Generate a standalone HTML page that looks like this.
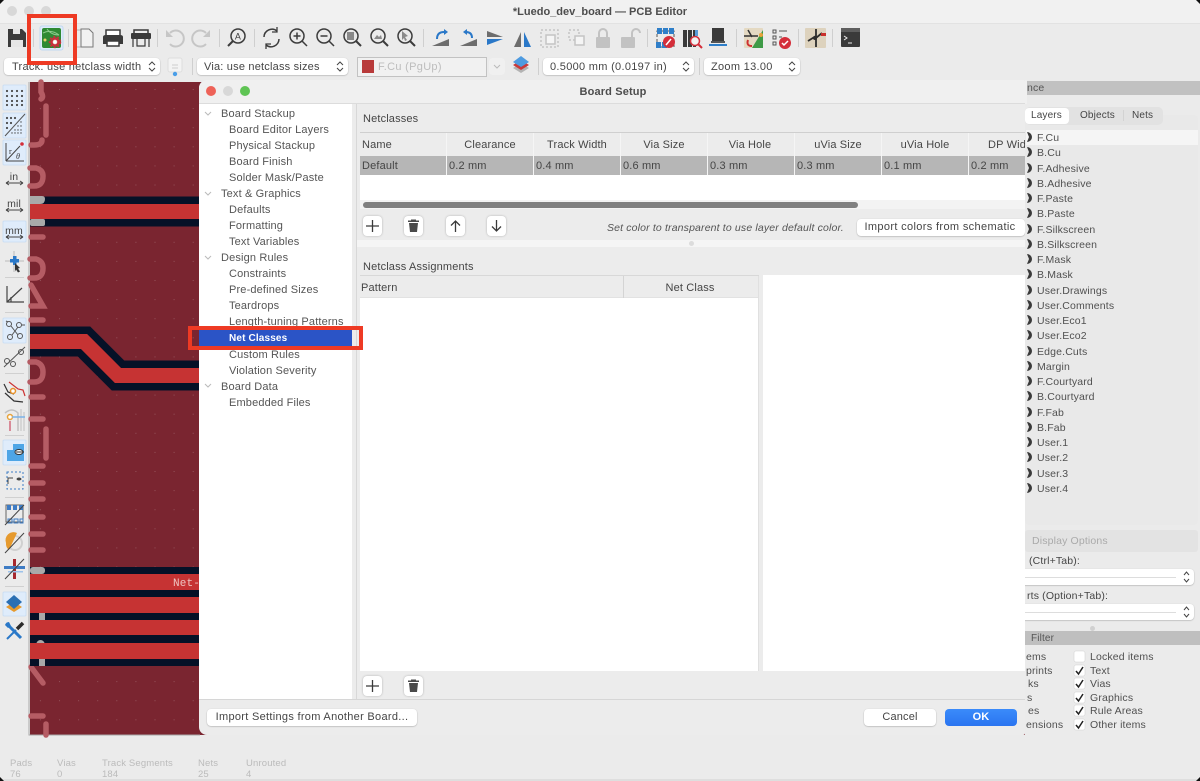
<!DOCTYPE html>
<html><head><meta charset="utf-8"><title>PCB Editor</title>
<style>
html,body{margin:0;padding:0;background:#ebebeb}
#r{position:relative;width:1200px;height:781px;overflow:hidden;background:#ebebeb;font-family:"Liberation Sans",sans-serif;font-size:11px;color:#454545;letter-spacing:.15px;filter:blur(.3px)}
.a{position:absolute}
.t{position:absolute;white-space:nowrap;line-height:14px;height:14px}
.c{transform:translateX(-50%)}
.b{position:absolute;background:#fff;border-radius:4px;box-shadow:0 .5px 1.5px rgba(0,0,0,.28)}
svg{position:absolute;left:0;top:0}
.w{position:absolute;left:0;top:1px}
.tree .t{color:#555}
</style></head><body><div id="r">
<div class="a" style="left:0;top:0;width:1200px;height:23px;background:#f1f1f1;border-bottom:1px solid #e2e2e2"></div>
<div class="t c" style="left:600px;top:5px;font-size:11px;font-weight:bold;color:#4d4d4d;letter-spacing:0">*Luedo_dev_board — PCB Editor</div>

<svg width="1200" height="781" viewBox="0 0 1200 781">
<defs><pattern id="g" x="59" y="89" width="19.1" height="19.1" patternUnits="userSpaceOnUse"><rect x="0" y="0" width="1" height="1" fill="#94525a"/></pattern></defs>
<circle cx="12" cy="11" r="5" fill="#d8d8d8"/><circle cx="29" cy="11" r="5" fill="#d8d8d8"/><circle cx="46" cy="11" r="5" fill="#d8d8d8"/>
<rect x="30" y="82" width="995" height="653" fill="#7a2530"/>
<rect x="30" y="82" width="995" height="653" fill="url(#g)"/>
<path d="M29 82V735H200" stroke="#a8a8a8" fill="none"/>
<!-- silk -->
<g fill="none" stroke="#b55c64" stroke-width="5.500" stroke-linecap="round">
<path d="M41 82V92Q44 97 41 99"/><path d="M46 106V135"/><path d="M31 145H34Q42 145 42 140"/>
<path d="M30 168H36Q43 170 43 176Q43 186 34 186H30"/><path d="M31 237H43"/>
<path d="M30 259H36Q43 261 43 268Q43 278 34 278H30"/><path d="M31 285L43 306H31"/><path d="M31 320H43"/>
<path d="M30 362H36Q43 364 43 372Q43 382 34 382H30"/><path d="M31 397H43"/>
<path d="M31 419H43"/><path d="M46 429V458"/><path d="M31 466H43"/><path d="M31 483H43"/><path d="M31 499H43"/><path d="M31 517H43"/><path d="M31 534H43"/><path d="M31 550H43"/>
<path d="M31 667L43 683"/><path d="M31 716H43"/><path d="M46 724V735"/>
</g>
<!-- tracks -->
<g fill="none" stroke="#061127" stroke-width="30"><path d="M30 211.500H210"/><path d="M30 341.500H84L118 375.500H210"/></g>
<g fill="#061127"><rect x="30" y="567" width="180" height="99"/></g>
<g fill="#a9a9a9"><path d="M30 196H42Q45 196 45 199Q45 204 40 204H30Z"/><rect x="30" y="219" width="15" height="7" rx="2"/><rect x="30" y="567" width="15" height="7" rx="3"/><rect x="39" y="612" width="6" height="9"/><path d="M36 644a5 7 0 0 1 9 0Z"/><rect x="39" y="658" width="6" height="8"/></g>
<g fill="none" stroke="#c63333" stroke-width="15"><path d="M30 211.500H210"/><path d="M30 341.500H84L118 375.500H210"/></g>
<g fill="#c63333"><rect x="30" y="574" width="180" height="16"/><rect x="30" y="597" width="180" height="16"/><rect x="30" y="620" width="180" height="15"/><rect x="30" y="643" width="180" height="16"/></g>
<text x="173" y="586" font-family="Liberation Mono" font-size="11" fill="#eec4c0">Net-</text>
</svg>

<!-- right panel -->
<div class="a" style="left:1025px;top:81px;width:175px;height:14px;background:#c1c1c1"></div>
<div class="t" style="left:1027px;top:81px;font-size:10.500px;color:#555">nce</div>
<div class="a" style="left:1025px;top:115px;width:173px;height:410px;background:#e9e9e9;border-radius:4px"></div>
<div class="a" style="left:1025px;top:107px;width:138px;height:18px;background:#e2e2e2;border-radius:5px"></div>
<div class="a" style="left:1025px;top:108px;width:44px;height:16px;background:#fff;border-radius:4px"></div>
<div class="t" style="left:1031px;top:109px;font-size:10px">Layers</div>
<div class="t" style="left:1080px;top:109px;font-size:10px">Objects</div>
<div class="t" style="left:1132px;top:109px;font-size:10px">Nets</div>
<div class="a" style="left:1123px;top:110px;width:1px;height:11px;background:#d3d3d3"></div>
<div class="a" style="left:1026px;top:130px;width:172px;height:15px;background:#f5f5f5"></div>
<svg width="1200" height="781" viewBox="0 0 1200 781"><defs><path id="cr" d="M1027 -5A5 5 0 0 1 1027 5L1029 0Z"/></defs><g fill="#3a3a3a">
<use href="#cr" y="137"/><use href="#cr" y="152"/><use href="#cr" y="168"/><use href="#cr" y="183"/><use href="#cr" y="198"/><use href="#cr" y="213"/><use href="#cr" y="229"/><use href="#cr" y="244"/><use href="#cr" y="259"/><use href="#cr" y="274"/><use href="#cr" y="290"/><use href="#cr" y="305"/><use href="#cr" y="320"/><use href="#cr" y="335"/><use href="#cr" y="351"/><use href="#cr" y="366"/><use href="#cr" y="381"/><use href="#cr" y="396"/><use href="#cr" y="412"/><use href="#cr" y="427"/><use href="#cr" y="442"/><use href="#cr" y="457"/><use href="#cr" y="473"/><use href="#cr" y="488"/></g></svg>
<div class="w" style="font-size:10.500px;color:#505050">
<div class="t" style="left:1037px;top:130px">F.Cu</div><div class="t" style="left:1037px;top:145px">B.Cu</div><div class="t" style="left:1037px;top:161px">F.Adhesive</div><div class="t" style="left:1037px;top:176px">B.Adhesive</div><div class="t" style="left:1037px;top:191px">F.Paste</div><div class="t" style="left:1037px;top:206px">B.Paste</div><div class="t" style="left:1037px;top:222px">F.Silkscreen</div><div class="t" style="left:1037px;top:237px">B.Silkscreen</div><div class="t" style="left:1037px;top:252px">F.Mask</div><div class="t" style="left:1037px;top:267px">B.Mask</div><div class="t" style="left:1037px;top:283px">User.Drawings</div><div class="t" style="left:1037px;top:298px">User.Comments</div><div class="t" style="left:1037px;top:313px">User.Eco1</div><div class="t" style="left:1037px;top:328px">User.Eco2</div><div class="t" style="left:1037px;top:344px">Edge.Cuts</div><div class="t" style="left:1037px;top:359px">Margin</div><div class="t" style="left:1037px;top:374px">F.Courtyard</div><div class="t" style="left:1037px;top:389px">B.Courtyard</div><div class="t" style="left:1037px;top:405px">F.Fab</div><div class="t" style="left:1037px;top:420px">B.Fab</div><div class="t" style="left:1037px;top:435px">User.1</div><div class="t" style="left:1037px;top:450px">User.2</div><div class="t" style="left:1037px;top:466px">User.3</div><div class="t" style="left:1037px;top:481px">User.4</div>
</div>
<div class="a" style="left:1025px;top:530px;width:173px;height:22px;background:#e3e3e3;border-radius:3px"></div>
<div class="t" style="left:1032px;top:534px;font-size:10.500px;color:#aaa">Display Options</div>
<div class="t" style="left:1029px;top:554px;font-size:10.500px">(Ctrl+Tab):</div>
<div class="b" style="left:1020px;top:569px;width:174px;height:16px"></div>
<div class="a" style="left:1025px;top:577px;width:151px;height:1px;background:#ddd"></div>
<div class="t" style="left:1027px;top:589px;font-size:10.500px">rts (Option+Tab):</div>
<div class="b" style="left:1020px;top:604px;width:174px;height:16px"></div>
<div class="a" style="left:1025px;top:612px;width:151px;height:1px;background:#ddd"></div>
<div class="a" style="left:1090px;top:626px;width:5px;height:5px;border-radius:3px;background:#d0d0d0"></div>
<div class="a" style="left:1025px;top:631px;width:175px;height:14px;background:#bfbfbf"></div>
<div class="t" style="left:1031px;top:632px;font-size:10px;color:#555">Filter</div>
<div style="font-size:10.500px;color:#505050">
<div class="t" style="left:1026px;top:650px">ems</div><div class="t" style="left:1026px;top:664px">prints</div><div class="t" style="left:1028px;top:677px">ks</div><div class="t" style="left:1027px;top:691px">s</div><div class="t" style="left:1028px;top:704px">es</div><div class="t" style="left:1026px;top:718px">ensions</div>
<div class="t" style="left:1090px;top:650px">Locked items</div><div class="t" style="left:1090px;top:664px">Text</div><div class="t" style="left:1090px;top:677px">Vias</div><div class="t" style="left:1090px;top:691px">Graphics</div><div class="t" style="left:1090px;top:704px">Rule Areas</div><div class="t" style="left:1090px;top:718px">Other items</div>
</div>
<svg width="1200" height="781" viewBox="0 0 1200 781">
<g fill="#fff" stroke="#d2d2d2" stroke-width=".6"><rect x="1074" y="651" width="11" height="11" rx="2"/><rect x="1074" y="665" width="11" height="11" rx="2"/><rect x="1074" y="678" width="11" height="11" rx="2"/><rect x="1074" y="692" width="11" height="11" rx="2"/><rect x="1074" y="705" width="11" height="11" rx="2"/><rect x="1074" y="719" width="11" height="11" rx="2"/></g>
<g fill="none" stroke="#222" stroke-width="1.500"><path d="M1076 671l2.500 3 4.500-7"/><path d="M1076 684l2.500 3 4.500-7"/><path d="M1076 698l2.500 3 4.500-7"/><path d="M1076 711l2.500 3 4.500-7"/><path d="M1076 725l2.500 3 4.500-7"/></g>
<g fill="none" stroke="#444" stroke-width="1"><path d="M1184 575l2.500-3 2.500 3M1184 579l2.500 3 2.500-3"/><path d="M1184 610l2.500-3 2.500 3M1184 614l2.500 3 2.500-3"/></g>
</svg>

<!-- dialog -->
<div class="a" style="left:199px;top:80px;width:826px;height:655px;background:#ececec;border-radius:8px 2px 2px 8px;overflow:hidden">
<div class="a" style="left:0;top:0;width:826px;height:23px;background:#f0f0f0;border-bottom:1px solid #dcdcdc"></div>
<div class="a" style="left:0;top:24px;width:153px;height:595px;background:#fff"></div>
<div class="a" style="left:157px;top:24px;width:1px;height:595px;background:#d8d8d8"></div>
<div class="a" style="left:0;top:619px;width:826px;height:1px;background:#d6d6d6"></div>
<div class="a" style="left:0;top:250px;width:153px;height:16px;background:#2b54c6"></div>
<div class="a" style="left:161px;top:52px;width:665px;height:1px;background:#cfcfcf"></div>
<div class="a" style="left:161px;top:76px;width:665px;height:19px;background:#b6b6b6"></div>
<div class="a" style="left:161px;top:95px;width:665px;height:25px;background:#fff"></div>
<div class="a" style="left:161px;top:120px;width:665px;height:9px;background:#f3f3f3"></div>
<div class="a" style="left:164px;top:122px;width:495px;height:6px;border-radius:3px;background:#808080"></div>
<div class="a" style="left:158px;top:160px;width:668px;height:7px;background:#f5f5f5"></div>
<div class="a" style="left:490px;top:161px;width:5px;height:5px;border-radius:3px;background:#dcdcdc"></div>
<div class="a" style="left:161px;top:218px;width:399px;height:373px;background:#fff"></div>
<div class="a" style="left:564px;top:195px;width:262px;height:396px;background:#fff"></div>
<div class="a" style="left:161px;top:195px;width:399px;height:23px;background:#ececec;border-top:1px solid #d8d8d8;border-bottom:1px solid #e2e2e2;box-sizing:border-box"></div>
<div class="a" style="left:424px;top:196px;width:1px;height:22px;background:#d4d4d4"></div>
<div class="a" style="left:559px;top:196px;width:1px;height:395px;background:#e0e0e0"></div>
<div class="a" style="left:247px;top:53px;width:1px;height:42px;background:#f5f5f5"></div><div class="a" style="left:334px;top:53px;width:1px;height:42px;background:#f5f5f5"></div><div class="a" style="left:421px;top:53px;width:1px;height:42px;background:#f5f5f5"></div><div class="a" style="left:508px;top:53px;width:1px;height:42px;background:#f5f5f5"></div><div class="a" style="left:595px;top:53px;width:1px;height:42px;background:#f5f5f5"></div><div class="a" style="left:682px;top:53px;width:1px;height:42px;background:#f5f5f5"></div><div class="a" style="left:769px;top:53px;width:1px;height:42px;background:#f5f5f5"></div>
<div class="w">
<div class="t" style="left:164px;top:31px;font-size:11px">Netclasses</div>
<div class="t" style="left:163px;top:57px;font-size:11px">Name</div>
<div class="t c" style="left:291px;top:57px">Clearance</div><div class="t c" style="left:378px;top:57px">Track Width</div><div class="t c" style="left:465px;top:57px">Via Size</div><div class="t c" style="left:551px;top:57px">Via Hole</div><div class="t c" style="left:639px;top:57px">uVia Size</div><div class="t c" style="left:726px;top:57px">uVia Hole</div><div class="t" style="left:789px;top:57px">DP Width</div>
<div class="t" style="left:163px;top:78px">Default</div><div class="t" style="left:250px;top:78px">0.2 mm</div><div class="t" style="left:337px;top:78px">0.4 mm</div><div class="t" style="left:424px;top:78px">0.6 mm</div><div class="t" style="left:511px;top:78px">0.3 mm</div><div class="t" style="left:598px;top:78px">0.3 mm</div><div class="t" style="left:685px;top:78px">0.1 mm</div><div class="t" style="left:772px;top:78px">0.2 mm</div>
<div class="t" style="left:164px;top:179px;font-size:11px">Netclass Assignments</div>
<div class="t" style="left:162px;top:200px">Pattern</div>
<div class="t c" style="left:491px;top:200px">Net Class</div>
<div class="t c" style="left:414px;top:4px;font-size:11px;font-weight:bold;color:#4d4d4d">Board Setup</div>
</div>
<div class="t" style="left:408px;top:141px;font-size:10.500px;font-style:italic;color:#555">Set color to transparent to use layer default color.</div>
<div class="b" style="left:658px;top:139px;width:168px;height:17px"></div>
<div class="t c" style="left:741px;top:140px;font-size:11px;letter-spacing:.35px">Import colors from schematic</div>
<div class="b" style="left:8px;top:629px;width:210px;height:17px"></div>
<div class="t c" style="left:113px;top:630px;font-size:11px;letter-spacing:.3px">Import Settings from Another Board...</div>
<div class="b" style="left:665px;top:629px;width:72px;height:17px"></div>
<div class="t c" style="left:701px;top:630px;font-size:11px">Cancel</div>
<div class="a" style="left:746px;top:629px;width:72px;height:17px;border-radius:4px;background:linear-gradient(#3a8bfa,#2a74f0)"></div>
<div class="t c" style="left:782px;top:630px;font-size:11px;font-weight:bold;color:#fff">OK</div>
<div class="tree w">
<div class="t" style="left:22px;top:26px">Board Stackup</div><div class="t" style="left:30px;top:42px">Board Editor Layers</div><div class="t" style="left:30px;top:58px">Physical Stackup</div><div class="t" style="left:30px;top:74px">Board Finish</div><div class="t" style="left:30px;top:90px">Solder Mask/Paste</div><div class="t" style="left:22px;top:106px">Text &amp; Graphics</div><div class="t" style="left:30px;top:122px">Defaults</div><div class="t" style="left:30px;top:138px">Formatting</div><div class="t" style="left:30px;top:154px">Text Variables</div><div class="t" style="left:22px;top:170px">Design Rules</div><div class="t" style="left:30px;top:186px">Constraints</div><div class="t" style="left:30px;top:202px">Pre-defined Sizes</div><div class="t" style="left:30px;top:218px">Teardrops</div><div class="t" style="left:30px;top:234px">Length-tuning Patterns</div><div class="t" style="left:30px;top:251px;color:#fff;font-weight:bold;font-size:10px">Net Classes</div><div class="t" style="left:30px;top:267px">Custom Rules</div><div class="t" style="left:30px;top:283px">Violation Severity</div><div class="t" style="left:22px;top:299px">Board Data</div><div class="t" style="left:30px;top:315px">Embedded Files</div>
</div>
</div>
<div class="a" style="left:1025px;top:80px;width:2px;height:24px;background:#f0f0f0"></div>

<!-- status -->
<div class="w" style="color:#bbb;font-size:9.500px">
<div class="t" style="left:10px;top:756px">Pads</div><div class="t" style="left:10px;top:767px">76</div>
<div class="t" style="left:57px;top:756px">Vias</div><div class="t" style="left:57px;top:767px">0</div>
<div class="t" style="left:102px;top:756px">Track Segments</div><div class="t" style="left:102px;top:767px">184</div>
<div class="t" style="left:198px;top:756px">Nets</div><div class="t" style="left:198px;top:767px">25</div>
<div class="t" style="left:246px;top:756px">Unrouted</div><div class="t" style="left:246px;top:767px">4</div>
</div>
<div class="a" style="left:0;top:779px;width:1200px;height:2px;background:#dedede"></div>

<!-- toolbar row 2 -->
<div class="b" style="left:4px;top:58px;width:156px;height:17px"></div>
<div class="t" style="left:12px;top:60px;letter-spacing:.25px">Track: use netclass width</div>
<div class="b" style="left:197px;top:58px;width:151px;height:17px"></div>
<div class="t" style="left:204px;top:60px;letter-spacing:.2px">Via: use netclass sizes</div>
<div class="a" style="left:357px;top:57px;width:128px;height:18px;background:#f1f1f1;border:1px solid #c2c2c2"></div>
<div class="a" style="left:362px;top:60px;width:12px;height:13px;background:#b83a3a"></div>
<div class="t" style="left:378px;top:60px;color:#bdbdbd;letter-spacing:.3px">F.Cu (PgUp)</div>
<div class="a" style="left:489px;top:58px;width:16px;height:17px;background:#f0f0f0;border-radius:4px"></div>
<div class="b" style="left:543px;top:58px;width:151px;height:17px"></div>
<div class="t" style="left:550px;top:60px;letter-spacing:.3px">0.5000 mm (0.0197 in)</div>
<div class="b" style="left:704px;top:58px;width:96px;height:17px"></div>
<div class="t" style="left:711px;top:60px;letter-spacing:.3px">Zoom 13.00</div>

<svg width="1200" height="781" viewBox="0 0 1200 781">
<!-- selectors -->
<g fill="none" stroke="#444" stroke-width="1"><path d="M149 65l3-3 3 3M149 68l3 3 3-3"/><path d="M337 65l3-3 3 3M337 68l3 3 3-3"/><path d="M683 65l3-3 3 3M683 68l3 3 3-3"/><path d="M789 65l3-3 3 3M789 68l3 3 3-3"/></g>
<path d="M494 65l3 3 3-3" fill="none" stroke="#bbb"/>
<rect x="168" y="58" width="14" height="14" rx="2" fill="#f3f3f3" stroke="#ddd"/><path d="M172 65h6M172 68h6" stroke="#ccc"/><circle cx="175" cy="74" r="2.200" fill="#4a9ee8"/>
<g fill="#cfcfcf"><rect x="33" y="29" width="1" height="18"/><rect x="68" y="29" width="1" height="18"/><rect x="157" y="29" width="1" height="18"/><rect x="219" y="29" width="1" height="18"/><rect x="254" y="29" width="1" height="18"/><rect x="423" y="29" width="1" height="18"/><rect x="647" y="29" width="1" height="18"/><rect x="736" y="29" width="1" height="18"/><rect x="798" y="29" width="1" height="18"/><rect x="832" y="29" width="1" height="18"/><rect x="192" y="58" width="1" height="17"/><rect x="538" y="58" width="1" height="17"/><rect x="699" y="58" width="1" height="17"/></g>
<!-- save -->
<path d="M8 29H22L26 33V47H8Z" fill="#3b3b3b"/><rect x="13" y="29" width="7" height="5" fill="#e6e6e6"/><rect x="11" y="40" width="12" height="7" fill="#e6e6e6"/>
<!-- board setup -->
<rect x="40" y="26" width="23" height="24" rx="2" fill="#dfecfb" stroke="#c2d9f2"/>
<rect x="42" y="28" width="19" height="20" rx="2" fill="#2e8a34"/><path d="M43 33q8-4 16 2M47 29q4 6 12 6" stroke="#8ccb8c" fill="none"/><circle cx="45" cy="40" r="1.500" fill="#e8d36a"/>
<circle cx="55" cy="42" r="3.500" fill="#f3efe6" stroke="#c9303c" stroke-width="2.500"/><circle cx="55" cy="42" r="5.500" fill="none" stroke="#c9303c" stroke-width="1.500" stroke-dasharray="2 2"/><circle cx="55" cy="42" r="1.200" fill="#fff"/>
<!-- page -->
<rect x="76" y="30" width="8" height="17" fill="none" stroke="#b5b5b5"/><path d="M81 29H89L93 33V47H81Z" fill="#f1f1f1" stroke="#777"/>
<!-- print -->
<path d="M106 30H120V36H106Z" fill="#fff" stroke="#3a3a3a" stroke-width="1.500"/><path d="M103 37Q103 35 106 35H120Q123 35 123 37V44H119V41H107V44H103Z" fill="#3a3a3a"/><rect x="107" y="41" width="12" height="5" fill="#fff" stroke="#3a3a3a" stroke-width="1.500"/>
<path d="M134 30H148V34H134Z" fill="none" stroke="#3a3a3a" stroke-width="1.500"/><rect x="131" y="33" width="20" height="6" rx="1" fill="#3a3a3a"/><path d="M133 39V47M149 39V47M137 39V46H145V39" stroke="#3a3a3a" fill="none" stroke-width="1.200"/>
<!-- undo redo -->
<g fill="none" stroke="#c6c6c6" stroke-width="2"><path d="M170 33A8 8 0 1 1 170 44"/><path d="M206 33A8 8 0 1 0 206 44"/></g><path d="M166 30V37H173Z" fill="#c6c6c6"/><path d="M210 30V37H203Z" fill="#c6c6c6"/>
<!-- magnifiers -->
<g fill="none" stroke="#3c3c3c" stroke-width="1.500">
<circle cx="238" cy="36" r="7"/><path d="M233 41L228 46" stroke-width="2"/>
<path d="M264 37A8 8 0 0 1 277 31M279 39A8 8 0 0 1 266 45"/><path d="M277 27V32H272M266 49V44H271" stroke-width="1.300"/>
<circle cx="297" cy="36" r="7"/><path d="M302 41L307 46M293.500 36H300.500M297 32.500V39.500"/>
<circle cx="324" cy="36" r="7"/><path d="M329 41L334 46M320.500 36H327.500"/>
<circle cx="351" cy="36" r="7"/><path d="M356 41L361 46" stroke-width="2"/>
<circle cx="378" cy="36" r="7"/><path d="M383 41L388 46" stroke-width="2"/>
<circle cx="405" cy="36" r="7"/><path d="M410 41L415 46" stroke-width="2"/>
</g>
<text x="238" y="39.500" font-size="9" font-family="Liberation Sans" fill="#3c3c3c" text-anchor="middle">A</text>
<rect x="347" y="32" width="7" height="8" fill="#8a8a8a"/><path d="M374 39l3-4 2 2 2-2 1 4z" fill="#8a8a8a"/><path d="M402 31l6 5-3 1 2 3-2 1-1-3-2 2z" fill="#8a8a8a"/>
<!-- flip rotate -->
<path d="M432 46L449 39V46Z" fill="#6d6d6d"/><path d="M437 39Q437 32 444 32" fill="none" stroke="#2a78c8" stroke-width="2"/><path d="M444 29l4 3-4 3z" fill="#2a78c8"/>
<path d="M460 46L477 39V46Z" fill="#6d6d6d"/><path d="M472 38Q472 32 466 32" fill="none" stroke="#2a78c8" stroke-width="2"/><path d="M467 29l-4 3 4 3z" fill="#2a78c8"/>
<path d="M487 31L503 37H487Z" fill="#6d6d6d"/><path d="M487 39H503L487 45Z" fill="#2a78c8"/>
<path d="M521 32V47H514Z" fill="#6d6d6d"/><path d="M524 32V47H531Z" fill="#2a78c8"/>
<!-- group -->
<g fill="none" stroke="#c4c4c4" stroke-width="1.500"><rect x="541" y="30" width="17" height="17" stroke-dasharray="2 2"/><rect x="546" y="35" width="9" height="9" fill="#f5f5f5"/><rect x="569" y="30" width="10" height="10" stroke-dasharray="2 2"/><rect x="575" y="36" width="9" height="9" fill="#f5f5f5"/></g>
<!-- locks -->
<g fill="#c2c2c2"><rect x="596" y="37" width="14" height="11" rx="1"/><rect x="621" y="37" width="14" height="11" rx="1"/></g><g fill="none" stroke="#c2c2c2" stroke-width="2"><path d="M599 37V33A4 4 0 0 1 607 33V37"/><path d="M632 37V33A4 4 0 0 1 640 33"/></g>
<!-- drc etc -->
<path d="M657 31H674V47H657Z" fill="none" stroke="#555" stroke-dasharray="3 2"/><g fill="#2f7fc9"><rect x="657" y="28" width="5" height="6"/><rect x="663" y="28" width="5" height="6"/><rect x="669" y="28" width="5" height="6"/><rect x="656" y="42" width="5" height="6"/><rect x="662" y="42" width="5" height="6"/></g><circle cx="669" cy="42" r="6" fill="#d42e3a"/><path d="M666 45l5-6" stroke="#fff" stroke-width="1.500"/>
<g fill="#3a3a3a"><rect x="683" y="30" width="4" height="17"/><rect x="688" y="30" width="4" height="17"/><rect x="693" y="30" width="3" height="17"/></g><circle cx="695" cy="41" r="4.500" fill="#f2f2f2" stroke="#d42e3a" stroke-width="1.500"/><path d="M698 44L702 48" stroke="#d42e3a" stroke-width="2"/><rect x="695" y="30" width="3" height="6" fill="#5a9bd8"/>
<rect x="712" y="28" width="12" height="14" fill="#3a3a3a"/><rect x="709" y="44" width="18" height="2" fill="#2f7fc9"/><path d="M711 42h14" stroke="#555" stroke-width="2"/>
<rect x="744" y="28" width="19" height="20" rx="1" fill="#e4d9c2"/><path d="M752 48L763 30V48Z" fill="#3e9a46"/><path d="M748 30L752 37M744 36H758" stroke="#333" stroke-width="1.500"/><path d="M752 46Q746 46 748 40" stroke="#cf3030" stroke-width="2" fill="none"/><circle cx="761" cy="35" r="2" fill="#e8a33a"/>
<g fill="none" stroke="#555"><rect x="773" y="30" width="3" height="3"/><rect x="773" y="36" width="3" height="3"/><rect x="773" y="42" width="3" height="3"/><path d="M779 31h8M779 37h3"/></g><circle cx="785" cy="43" r="6" fill="#d42e3a"/><path d="M782 43l2 2 4-4" stroke="#fff" stroke-width="1.500" fill="none"/>
<rect x="805" y="28" width="21" height="20" rx="1" fill="#ddd2bd"/><path d="M816 29V47M808 41L816 36L816 38L822 33" stroke="#2d2d2d" stroke-width="1.800" fill="none"/><rect x="821" y="33" width="5" height="3" fill="#c9302c"/><circle cx="815" cy="38" r="2" fill="#2d2d2d"/>
<rect x="841" y="28" width="19" height="19" rx="1" fill="#3a3a3a"/><rect x="841" y="28" width="19" height="4" fill="#5e5e5e"/><path d="M844 36l3 2-3 2M848 43h4" stroke="#eee" fill="none"/>
<!-- layer stack -->
<path d="M521 63l8 5-8 5-8-5z" fill="#8d8d8d" opacity=".6"/><path d="M521 60l8 5-8 5-8-5z" fill="#c93a3a"/><path d="M521 56l8 6-8 5-8-5z" fill="#4e9be0"/>

<!-- left toolbar -->
<g fill="#dfecfb" stroke="#c6dcf3" stroke-width=".8"><rect x="3" y="85" width="23" height="25" rx="1"/><rect x="3" y="113" width="23" height="25" rx="1"/><rect x="3" y="140" width="23" height="25" rx="1"/><rect x="3" y="221" width="23" height="21" rx="1"/><rect x="3" y="318" width="23" height="25" rx="1"/><rect x="3" y="440" width="23" height="25" rx="1"/><rect x="3" y="592" width="23" height="24" rx="1"/></g>
<g fill="#4a4a4a"><circle cx="7" cy="91" r="1.100"/><circle cx="12" cy="91" r="1.100"/><circle cx="17" cy="91" r="1.100"/><circle cx="22" cy="91" r="1.100"/><circle cx="7" cy="96" r="1.100"/><circle cx="12" cy="96" r="1.100"/><circle cx="17" cy="96" r="1.100"/><circle cx="22" cy="96" r="1.100"/><circle cx="7" cy="101" r="1.100"/><circle cx="12" cy="101" r="1.100"/><circle cx="17" cy="101" r="1.100"/><circle cx="22" cy="101" r="1.100"/><circle cx="7" cy="105" r="1.100"/><circle cx="12" cy="105" r="1.100"/><circle cx="17" cy="105" r="1.100"/><circle cx="22" cy="105" r="1.100"/>
<circle cx="7" cy="118" r="1.100"/><circle cx="11" cy="118" r="1.100"/><circle cx="15" cy="118" r="1.100"/><circle cx="7" cy="123" r="1.100"/><circle cx="11" cy="123" r="1.100"/><circle cx="7" cy="128" r="1.100"/><circle cx="21" cy="122" r=".7"/><circle cx="18" cy="126" r=".7"/><circle cx="21" cy="126" r=".7"/><circle cx="15" cy="130" r=".7"/><circle cx="18" cy="130" r=".7"/><circle cx="21" cy="130" r=".7"/><circle cx="12" cy="133" r=".7"/><circle cx="15" cy="133" r=".7"/><circle cx="18" cy="133" r=".7"/><circle cx="21" cy="133" r=".7"/></g>
<path d="M5 136L25 114" stroke="#555"/>
<g fill="none" stroke="#444" stroke-width="1"><path d="M6 161V143M6 161H24M6 161L20 146"/><path d="M6 183H23M6 183l3-2M6 183l3 2M23 183l-3-2M23 183l-3 2"/><path d="M6 210H23M6 210l3-2M6 210l3 2M23 210l-3-2M23 210l-3 2"/><path d="M6 237H23M6 237l3-2M6 237l3 2M23 237l-3-2M23 237l-3 2"/></g>
<circle cx="22" cy="144" r="1.800" fill="#d42e3a"/>
<text x="9" y="154" font-size="8" font-family="Liberation Serif" fill="#333">r</text><text x="16" y="159" font-size="8" font-family="Liberation Serif" font-style="italic" fill="#333">θ</text>
<g font-family="Liberation Sans" font-size="10.500" fill="#444" text-anchor="middle"><text x="14" y="180">in</text><text x="14" y="207">mil</text><text x="14" y="234">mm</text></g>
<path d="M5 261H24M14 251V272" stroke="#bbb"/><rect x="10" y="259" width="9" height="3.500" fill="#2a78c8"/><rect x="13" y="256" width="3.500" height="9" fill="#2a78c8"/><path d="M15 263l5 5-2 .5 2 3-2 1-2-3-1 2z" fill="#333"/>
<rect x="5" y="277" width="19" height="1" fill="#d0d0d0"/><rect x="5" y="312" width="19" height="1" fill="#d0d0d0"/><rect x="5" y="373" width="19" height="1" fill="#d0d0d0"/><rect x="5" y="435" width="19" height="1" fill="#d0d0d0"/><rect x="5" y="497" width="19" height="1" fill="#d0d0d0"/><rect x="5" y="586" width="19" height="1" fill="#d0d0d0"/>
<g fill="none" stroke="#444" stroke-width="1.200"><path d="M7 286V302H24M7 302L22 288M11 302V297"/></g>
<g fill="none" stroke="#555" stroke-width="1"><circle cx="9" cy="324" r="2.500"/><circle cx="19" cy="325" r="2.500"/><circle cx="10" cy="337" r="2.500"/><circle cx="20" cy="336" r="2.500"/><path d="M11 326L18 335M18 327L12 335M6 321l2 1M22 325h3"/><circle cx="7" cy="361" r="2.500"/><circle cx="21" cy="352" r="2.500"/><circle cx="13" cy="364" r="2.500"/><path d="M4 367L25 347"/></g>
<path d="M9 382L18 389L23 390L25 396" stroke="#c33" fill="none" stroke-width="1.200"/><path d="M4 384L8 392L14 394M5 393L14 401L23 402" stroke="#333" fill="none" stroke-width="1.200"/><circle cx="13" cy="391" r="2.500" fill="#fff" stroke="#e8922a" stroke-width="1.500"/>
<path d="M5 413Q12 407 18 413V431M10 422V431" fill="none" stroke="#c0c0c0" stroke-width="1.500"/><path d="M21 409V431M24 412V431" fill="none" stroke="#c0c0c0"/><circle cx="10" cy="417" r="2.500" fill="#fff" stroke="#e8a33a" stroke-width="1.500"/><path d="M12 417H25" stroke="#7ab2e8" stroke-width="1.500"/><path d="M10 421V431" stroke="#d88a98" stroke-width="2"/>
<path d="M7 461V450H13V444H24V461Z" fill="#4ea5e6"/><ellipse cx="19" cy="452" rx="4" ry="2.500" fill="#fff" stroke="#333"/><path d="M16 452h8" stroke="#333"/>
<rect x="7" y="472" width="16" height="17" fill="none" stroke="#3e7cc4" stroke-dasharray="2 2"/><path d="M13 478H8V484" fill="none" stroke="#444"/><ellipse cx="19" cy="479" rx="2.500" ry="1.500" fill="#444"/>
<path d="M6 505H23V522H6Z" fill="none" stroke="#666"/><g fill="#3e7cc4"><rect x="7" y="505" width="4" height="5"/><rect x="13" y="505" width="4" height="5"/><rect x="19" y="505" width="4" height="5"/></g><g fill="none" stroke="#3e7cc4"><rect x="8" y="519" width="4" height="4"/><rect x="14" y="519" width="4" height="4"/><rect x="20" y="519" width="3" height="4"/></g><path d="M5 525L24 505" stroke="#444"/>
<circle cx="15" cy="543" r="7" fill="none" stroke="#d0d0d0" stroke-width="2"/><path d="M6 543A8 8 0 0 1 17 533L9 550A8 8 0 0 1 6 543Z" fill="#e69a2e"/><path d="M5 553L24 533" stroke="#444"/>
<rect x="13" y="559" width="3" height="20" fill="#a6282e"/><rect x="4" y="566" width="21" height="3" fill="#3e7cc4"/><rect x="8" y="571" width="15" height="1.500" fill="#9cc2ea"/><path d="M5 579L24 559" stroke="#444"/>
<path d="M14 602l8 5-8 5-8-5z" fill="#e69a2e"/><path d="M14 595l8 7-8 7-8-7z" fill="#2a6fb3"/>
<path d="M8 625L21 638" fill="none" stroke="#2a78c8" stroke-width="3"/><path d="M5 625Q6 622 9 622L11 626L8 628Z" fill="#2a78c8"/><path d="M16 630L7 639" stroke="#2a78c8" stroke-width="2"/><path d="M23 623L17 629" stroke="#2b2b2b" stroke-width="3.500"/>

<!-- red highlight -->
<rect x="29" y="16" width="46" height="47" fill="none" stroke="#ee3a24" stroke-width="4"/>
<rect x="190" y="328" width="171" height="20" fill="none" stroke="#ee3a24" stroke-width="4"/>

<!-- dialog lights and small -->
<circle cx="211" cy="91" r="5" fill="#ee6258"/><circle cx="228" cy="91" r="5" fill="#d8d8d8"/><circle cx="245" cy="91" r="5" fill="#5fc454"/>
<g fill="none" stroke="#bbb"><path d="M205 112l3 3 3-3M205 192l3 3 3-3M205 256l3 3 3-3M205 384l3 3 3-3"/></g>
<!-- buttons -->
<g fill="#fff" style="filter:drop-shadow(0 .5px 1px rgba(0,0,0,.25))"><rect x="363" y="216" width="19" height="20" rx="4"/><rect x="404" y="216" width="19" height="20" rx="4"/><rect x="446" y="216" width="19" height="20" rx="4"/><rect x="487" y="216" width="19" height="20" rx="4"/><rect x="363" y="676" width="19" height="20" rx="4"/><rect x="404" y="676" width="19" height="20" rx="4"/></g>
<g fill="none" stroke="#3a3a3a" stroke-width="1.300"><path d="M366 226H379M372.500 220V232"/><path d="M366 686H379M372.500 680V692"/><path d="M455.500 232V221M451 225.500L455.500 221L460 225.500"/><path d="M496.500 220V231M492 226.500L496.500 231L501 226.500"/></g>
<g fill="#4a4a4a"><path d="M409 223H418L417 232H410Z"/><rect x="408" y="220.500" width="11" height="1.500"/><rect x="411" y="219.500" width="5" height="1.500"/><path d="M409 683H418L417 692H410Z"/><rect x="408" y="680.500" width="11" height="1.500"/><rect x="411" y="679.500" width="5" height="1.500"/></g>
<path d="M0 0H4L0 4ZM1200 0H1196L1200 4ZM0 781V777L4 781ZM1200 781V777L1196 781Z" fill="#111"/>
</svg>
</div></body></html>
